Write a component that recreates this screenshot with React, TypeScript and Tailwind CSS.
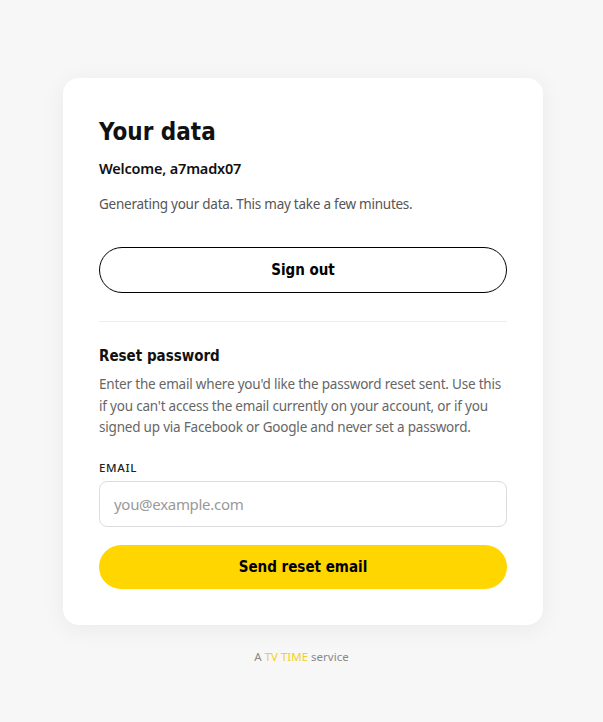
export default function App() {
  return (
    <div className="min-h-screen bg-[#f7f7f7] pt-[78px] font-['Noto_Sans',sans-serif]">
      <div className="ml-[63px] w-[480px] rounded-2xl bg-white px-9 pt-[38px] pb-9 shadow-[0_4px_24px_rgba(0,0,0,0.06)]">
        <h1 className="font-['DejaVu_Sans_Condensed','DejaVu_Sans',sans-serif] text-[24px] font-bold leading-8 text-[#111]">Your data</h1>
        <p className="mt-[10px] text-[14.5px] font-semibold leading-5 tracking-[-0.2px] text-[#111]">Welcome, a7madx07</p>
        <p className="mt-[16px] text-[13.5px] leading-5 tracking-[-0.25px] text-[#555]">Generating your data. This may take a few minutes.</p>

        <button className="mt-[33px] h-[46px] w-full rounded-full border border-black bg-white font-['DejaVu_Sans_Condensed','DejaVu_Sans',sans-serif] text-[15px] font-bold text-black">
          Sign out
        </button>

        <div className="mt-[28px] border-t border-[#eeeeee]" />

        <h2 className="mt-[24px] font-['DejaVu_Sans_Condensed','DejaVu_Sans',sans-serif] text-[15px] font-bold leading-5 text-[#111]">Reset password</h2>
        <p className="mt-[8px] text-[13.5px] leading-[21.5px] tracking-[-0.2px] text-[#666]">
          Enter the email where you'd like the password reset sent. Use this if you can't access the email currently on your account, or if you signed up via Facebook or Google and never set a password.
        </p>

        <label className="mt-[20px] block text-[11.5px] font-medium tracking-[0.06em] text-[#222]">EMAIL</label>
        <input
          type="email"
          placeholder="you@example.com"
          className="mt-[5px] h-[46px] w-full rounded-lg border border-[#dcdcdc] px-[14px] text-[15px] tracking-[-0.3px] text-[#333] outline-none placeholder:text-[#999]"
        />

        <button className="mt-[18px] h-[44px] w-full rounded-full bg-[#ffd600] font-['DejaVu_Sans_Condensed','DejaVu_Sans',sans-serif] text-[15px] font-bold text-black">
          Send reset email
        </button>
      </div>

      <p className="mt-[23px] text-center text-[11.5px] text-[#888]">
        A <span className="text-[#f5cf1c]">TV TIME</span> service
      </p>
    </div>
  );
}
